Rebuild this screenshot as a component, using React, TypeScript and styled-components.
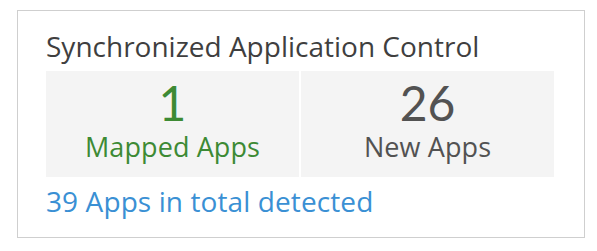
import styled, { createGlobalStyle } from 'styled-components'

const GlobalStyle = createGlobalStyle`
  body {
    margin: 0;
    background: #ffffff;
    font-family: 'Open Sans', 'Liberation Sans', sans-serif;
  }
`

const Card = styled.section`
  box-sizing: border-box;
  width: 568px;
  margin: 10px 0 0 17px;
  padding: 21px 30px 22px 28px;
  border: 1px solid #cfcfcf;
  background: #ffffff;
`

const Title = styled.h2`
  margin: 0;
  font-size: 28px;
  font-weight: 400;
  line-height: 28px;
  color: #3f3f3f;
`

const Stats = styled.div`
  display: grid;
  grid-template-columns: 1fr 1fr;
  gap: 2px;
  margin-top: 11px;
`

const StatBox = styled.div<{ $color: string }>`
  display: flex;
  flex-direction: column;
  align-items: center;
  padding: 8px 0 17px;
  background: #f4f4f4;
  color: ${(p) => p.$color};
`

const StatValue = styled.div`
  font-family: Lato, 'Open Sans', sans-serif;
  font-size: 48px;
  line-height: 48px;
`

const StatLabel = styled.div`
  margin-top: 6px;
  font-size: 27px;
  line-height: 27px;
  letter-spacing: 0.1px;
`

const TotalLink = styled.a`
  display: block;
  margin-top: 10px;
  font-size: 28px;
  line-height: 28px;
  color: #3a90d4;
  text-decoration: none;
  letter-spacing: 0.1px;
`

const stats = [
  { value: 1, label: 'Mapped Apps', color: '#3d8a34' },
  { value: 26, label: 'New Apps', color: '#525252' },
]

export default function App() {
  return (
    <>
      <GlobalStyle />
      <Card>
        <Title>Synchronized Application Control</Title>
        <Stats>
          {stats.map((s) => (
            <StatBox key={s.label} $color={s.color}>
              <StatValue>{s.value}</StatValue>
              <StatLabel>{s.label}</StatLabel>
            </StatBox>
          ))}
        </Stats>
        <TotalLink href="#">39 Apps in total detected</TotalLink>
      </Card>
    </>
  )
}
